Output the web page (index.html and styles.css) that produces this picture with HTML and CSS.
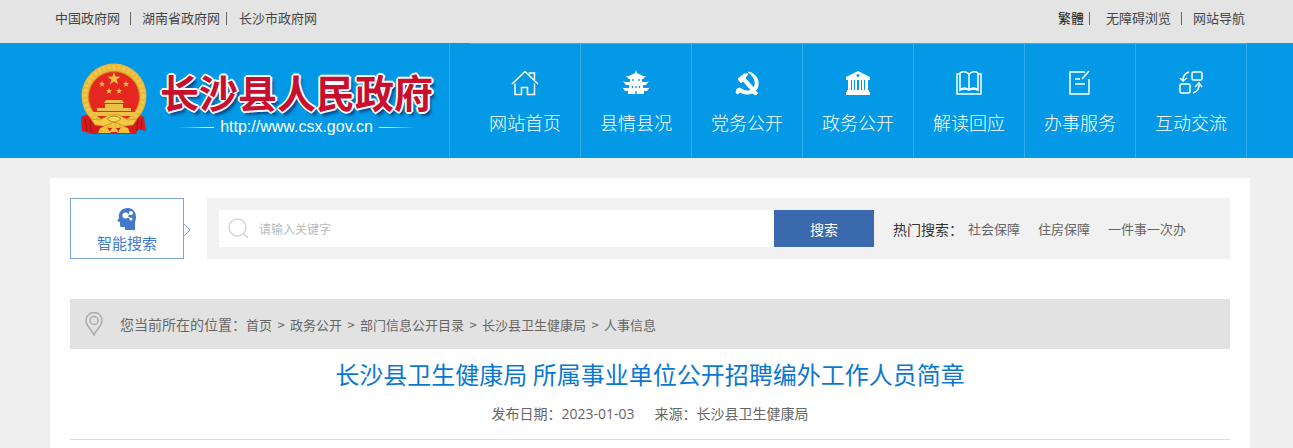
FILE: index.html
```
<!DOCTYPE html>
<html lang="zh-CN">
<head>
    <meta charset="UTF-8">
    <meta name="viewport" content="width=device-width, initial-scale=1.0">
    <title>长沙县人民政府</title>
    <link rel="stylesheet" href="styles.css">
</head>
<body>

    <!-- Top bar -->
    <div class="top">
        <div class="wrap top-inner">
            <div class="top-left">
                <a href="#">中国政府网</a><span class="bar wide"></span><a href="#">湖南省政府网</a><span class="bar"></span><a href="#">长沙市政府网</a>
            </div>
            <div class="top-right">
                <a href="#" class="dark">繁體</a><span class="bar near"></span><a href="#">无障碍浏览</a><span class="bar wide"></span><a href="#">网站导航</a>
            </div>
        </div>
    </div>

    <!-- Header -->
    <header class="header">
        <div class="wrap header-inner">
            <a href="#" class="logo">
                <svg class="emblem" width="68" height="72" viewBox="0 0 68 72" aria-hidden="true">
                    <path d="M9 51 L1 54 L2 68 L12 71 H56 L58 66 L66 68 L64 54 L57 51Z" fill="#d81a1c"/>
                    <path d="M5 55 L7 68 M10 57 L11 69 M58 56 L57 68 M62 56 L61 67" stroke="#9f1218" stroke-width="1" fill="none"/>
                    <circle cx="34" cy="33" r="32.5" fill="#e9b83a"/>
                    <circle cx="34" cy="33" r="29" fill="none" stroke="#f0c94a" stroke-width="4" stroke-dasharray="3 2"/>
                    <circle cx="34" cy="34" r="25.5" fill="#e5271f" stroke="#c98b20" stroke-width="1"/>
                    <g fill="#eec049">
                        <path d="M34 9 L35.6 13.6 L40.5 13.7 L36.6 16.6 L38 21.3 L34 18.5 L30 21.3 L31.4 16.6 L27.5 13.7 L32.4 13.6Z"/>
                        <path d="M22 18l.8 2.1 2.3.1-1.8 1.4.6 2.2-1.9-1.3-1.9 1.3.6-2.2-1.8-1.4 2.3-.1z"/>
                        <path d="M46 18l.8 2.1 2.3.1-1.8 1.4.6 2.2-1.9-1.3-1.9 1.3.6-2.2-1.8-1.4 2.3-.1z"/>
                        <path d="M29 25l.8 2.1 2.3.1-1.8 1.4.6 2.2-1.9-1.3-1.9 1.3.6-2.2-1.8-1.4 2.3-.1z"/>
                        <path d="M39 25l.8 2.1 2.3.1-1.8 1.4.6 2.2-1.9-1.3-1.9 1.3.6-2.2-1.8-1.4 2.3-.1z"/>
                        <path d="M26 37h16l2 3H24zM25 41h18v4h8v3h-34v-3h8zM12 49h44l-3 4H15z"/>
                    </g>
                    <path d="M20 57 L29 52 H39 L48 57 L57 56 L53 62 L44 63 L34 59 L24 63 L15 62 L11 56Z" fill="#f3cb45" stroke="#c98b20" stroke-width=".7"/>
                    <path d="M27 56 Q34 50 41 56 Q34 62 27 56Z" fill="#f7d75a" stroke="#c98b20"/>
                    <path d="M20 65 L26 63 L31 70 H18ZM48 65 L42 63 L37 70 H50ZM34 63l5 6H29z" fill="#efc13c"/>
                </svg>
                <span class="logo-text">
                    <span class="logo-name">长沙县人民政府</span>
                    <span class="logo-url">http://www.csx.gov.cn</span>
                </span>
            </a>
            <nav class="nav">
                <a href="#">
                    <svg width="28" height="26" viewBox="0 0 28 26" class="line"><path d="M1 14 L14 1.5 L27 14 M4 13.500V24.500H10.500V17.500H16.500V24.500H23.500V13.500 M18.500 4.500V3H23.500V9.500"/></svg>
                    网站首页
                </a>
                <a href="#">
                    <svg width="28" height="26" viewBox="0 0 28 26" class="solid"><path d="M14 0l1 3 6 3h3l-3 3H7L4 6h3l6-3zM8 9h12v3h5l2-1-3 4H4l-3-4 2 1h5zM7 15h14v3h6l1-1-3 4h-3v3H6v-3H3l-3-4 1 1h6z"/><path d="M11 9v2M17 9v2M10.500 16v2M14 16v2M17.500 16v2M14 21v3" stroke="#0399e6" stroke-width="1.300"/></svg>
                    县情县况
                </a>
                <a href="#">
                    <svg width="26" height="26" viewBox="0 0 26 26" class="solid"><path d="M14 2C21 3 25 9 24 15c0 3-2 5-3 6l3 2-2 2-4-2c-4 2-9 1-12-1l-2 2-2-1 1-4 3-1c4 3 8 4 11 2L9 11l-2 2-3-4 6-5h4l-3 4 9 10c3-6 0-12-6-16z" stroke="#fff"/></svg>
                    党务公开
                </a>
                <a href="#">
                    <svg width="26" height="26" viewBox="0 0 26 26" class="solid"><path fill-rule="evenodd" d="M13 1L25 7v3H1V7zM13 4a1.500 1.500 0 1 0 .01 0zM3 10h3v10H3zM7 10h2v10H7zM10 10h2v10h-2zM14 10h2v10h-2zM17 10h2v10h-2zM20 10h3v10h-3zM2 20h22v2h1v3H1v-3h1z"/></svg>
                    政务公开
                </a>
                <a href="#">
                    <svg width="28" height="26" viewBox="0 0 28 26" class="line"><path d="M5 4H2V24H26V4H23M14 4Q9 0 5 3V20Q9 16 14 20Q19 16 23 20V3Q19 0 14 4V20M6 20Q9 18 14 20Q19 18 22 20"/></svg>
                    解读回应
                </a>
                <a href="#">
                    <svg width="24" height="26" viewBox="0 0 24 26" class="line"><path d="M17 2H2V24H21V9M7 9H12M7 14H17M21 1L14 9"/></svg>
                    办事服务
                </a>
                <a href="#">
                    <svg width="26" height="26" viewBox="0 0 26 26" class="line"><rect x="14" y="2" width="10" height="8" rx="1.500"/><rect x="2" y="14" width="10" height="9" rx="1.500"/><path d="M11 2Q5 4 5 10M2 8l3 3 4-3M15 23Q21 21 21 15M17 17l4-4 3 4"/></svg>
                    互动交流
                </a>
            </nav>
        </div>
    </header>

    <main class="wrap main">
        <!-- Search -->
        <div class="search">
            <a href="#" class="smart">
                <svg width="20" height="23" viewBox="0 0 20 23"><path d="M11 0C16 0 19 4 19 9c0 3-1 4-1 6v7H8v-3H4c-1 0-1-2-1-5L0 13l2-3C1 4 5 0 11 0z" fill="#4379cb"/><g fill="#fff"><circle cx="8.500" cy="7.500" r="3"/><circle cx="14" cy="5" r="2"/><circle cx="14" cy="11" r="1.500"/></g><path d="M9 8l5-3M9 8l5 3" stroke="#fff"/></svg>
                智能搜索
                <svg class="arrow" width="8" height="12" viewBox="0 0 8 12"><path d="M1 0L7 6L1 12" fill="#fff" stroke="#7fa5de"/></svg>
            </a>
            <form class="search-bar" onsubmit="return false">
                <div class="field">
                    <svg width="22" height="22" viewBox="0 0 22 22"><circle cx="9.500" cy="9.500" r="8.500"/><path d="M15.500 15.500L20 20"/></svg>
                    <input type="text" placeholder="请输入关键字" aria-label="请输入关键字">
                </div>
                <button type="submit">搜索</button>
                <div class="hot">
                    <span class="hot-label">热门搜索：</span>
                    <a href="#">社会保障</a>
                    <a href="#">住房保障</a>
                    <a href="#">一件事一次办</a>
                </div>
            </form>
        </div>

        <!-- Breadcrumb -->
        <div class="crumbs">
            <svg width="18" height="24" viewBox="0 0 18 24"><path d="M9 23C7 18 1 14 1 8.500a8 8 0 0 1 16 0C17 14 11 18 9 23z"/><circle cx="9" cy="8.500" r="4"/></svg>
            <span class="crumbs-label">您当前所在的位置：</span>
            <a href="#">首页</a><span class="gt">&gt;</span><a href="#">政务公开</a><span class="gt">&gt;</span><a href="#">部门信息公开目录</a><span class="gt">&gt;</span><a href="#">长沙县卫生健康局</a><span class="gt">&gt;</span><a href="#">人事信息</a>
        </div>

        <!-- Article -->
        <h1>长沙县卫生健康局 所属事业单位公开招聘编外工作人员简章</h1>
        <div class="meta">
            <span>发布日期：2023-01-03</span>
            <span>来源：长沙县卫生健康局</span>
        </div>
    </main>

</body>
</html>
```
FILE: styles.css
```
* {
    box-sizing: border-box;
}
body {
    margin: 0;
    background-color: #efefef;
    font-family: "Noto Sans CJK SC", sans-serif;
    font-size: 13px;
    color: #666;
}
a {
    color: inherit;
    text-decoration: none;
}
.wrap {
    margin: 0 43px 0 50px;
}

/* Top bar */
.top {
    background-color: #e4e4e4;
    color: #444;
}
.top-inner {
    display: flex;
    justify-content: space-between;
    align-items: flex-start;
    height: 43px;
    padding: 8px 5px;
}
.top-left,
.top-right {
    display: flex;
    align-items: center;
    line-height: 20px;
}
.dark {
    color: #222;
}
.bar {
    width: 1px;
    height: 13px;
    margin: 0 12px 0 6px;
    background-color: #666;
}
.bar.wide {
    margin: 0 11px 0 10px;
}
.bar.near {
    margin: 0 16px 0 5px;
}

/* Header */
.header {
    background-color: #0399e6;
}
.header-inner {
    display: flex;
    justify-content: space-between;
    padding-right: 3px;
}
.logo {
    display: flex;
    padding: 20px 0 0 30px;
}
.logo-text {
    display: flex;
    flex-direction: column;
    align-items: center;
    margin-left: 12px;
}
.logo-name {
    font-size: 39px;
    font-weight: 700;
    line-height: 56px;
    color: #c8102e;
    white-space: nowrap;
    text-shadow: -1px -1px 0 #fff, 1px -1px 0 #fff, -1px 1px 0 #fff, 1px 1px 0 #fff,
        -2px 0 0 #fff, 2px 0 0 #fff, 0 -2px 0 #fff, 0 2px 0 #fff, 3px 4px 3px #064a8c;
}
.logo-url {
    display: flex;
    align-items: center;
    gap: 6px;
    font-family: "Liberation Sans", Arial, sans-serif;
    font-size: 16px;
    line-height: 16px;
    color: #fff;
}
.logo-url::before,
.logo-url::after {
    content: "";
    width: 36px;
    height: 1px;
    background: linear-gradient(to right, transparent, #fff);
}
.logo-url::after {
    background: linear-gradient(to left, transparent, #fff);
}
.nav {
    display: flex;
    padding-left: 20px;
    border-left: 1px solid #35adeb;
}
.nav a {
    display: flex;
    flex-direction: column;
    align-items: center;
    width: 111px;
    height: 115px;
    padding-top: 26px;
    border-top: 1px solid #35adeb;
    border-right: 1px solid #35adeb;
    font-size: 18px;
    font-weight: 300;
    line-height: 26px;
    color: #fff;
}
.nav svg {
    margin-bottom: 13px;
}
.line {
    fill: none;
    stroke: #fff;
    stroke-width: 1.5;
}
.solid {
    fill: #fff;
}

/* Main */
.main {
    margin-top: 20px;
    padding: 20px;
    background-color: #fff;
}
.search {
    display: flex;
    gap: 23px;
}
.smart {
    position: relative;
    display: flex;
    flex-direction: column;
    align-items: center;
    width: 114px;
    height: 61px;
    padding-top: 9px;
    border: 1px solid #7fa5de;
    font-size: 15px;
    line-height: 24px;
    color: #4379cb;
}
.arrow {
    position: absolute;
    right: -8px;
    top: 25px;
}
.search-bar {
    display: flex;
    flex: 1;
    padding: 12px;
    background-color: #f1f1f1;
}
.field {
    display: flex;
    flex: 1;
    align-items: center;
    padding-left: 9px;
    background-color: #fff;
}
.field svg {
    fill: none;
    stroke: #d5d5d5;
    stroke-width: 1.5;
}
.field input {
    flex: 1;
    min-width: 0;
    padding: 0 9px;
    border: none;
    outline: none;
    background: none;
    font-family: inherit;
    font-size: 12px;
}
.field input::placeholder {
    color: #bbb;
}
.search-bar button {
    width: 100px;
    height: 37px;
    padding: 0;
    border: none;
    background-color: #3b69ad;
    color: #fff;
    font-family: inherit;
    font-size: 14px;
    cursor: pointer;
}
.hot {
    display: flex;
    align-items: center;
    gap: 18px;
    width: 344px;
    padding-left: 19px;
    white-space: nowrap;
}
.hot-label {
    margin-right: -13px;
    font-size: 14px;
    color: #333;
}

/* Breadcrumb */
.crumbs {
    display: flex;
    align-items: center;
    height: 50px;
    margin-top: 40px;
    padding-left: 15px;
    background-color: #e2e2e2;
}
.crumbs svg {
    margin-right: 17px;
    fill: none;
    stroke: #aaa;
    stroke-width: 1.5;
}
.crumbs-label {
    font-size: 14px;
}
.gt {
    width: 18px;
    text-align: center;
}

/* Article */
h1 {
    margin: 7px 0 0;
    font-size: 24px;
    font-weight: 400;
    line-height: 36px;
    text-align: center;
    color: #0a78d1;
}
.meta {
    display: flex;
    justify-content: center;
    gap: 20px;
    padding: 12px 0 15px;
    border-bottom: 1px solid #ddd;
    font-family: "Open Sans", "Noto Sans CJK SC", sans-serif;
    font-size: 14px;
    line-height: 20px;
}
```
